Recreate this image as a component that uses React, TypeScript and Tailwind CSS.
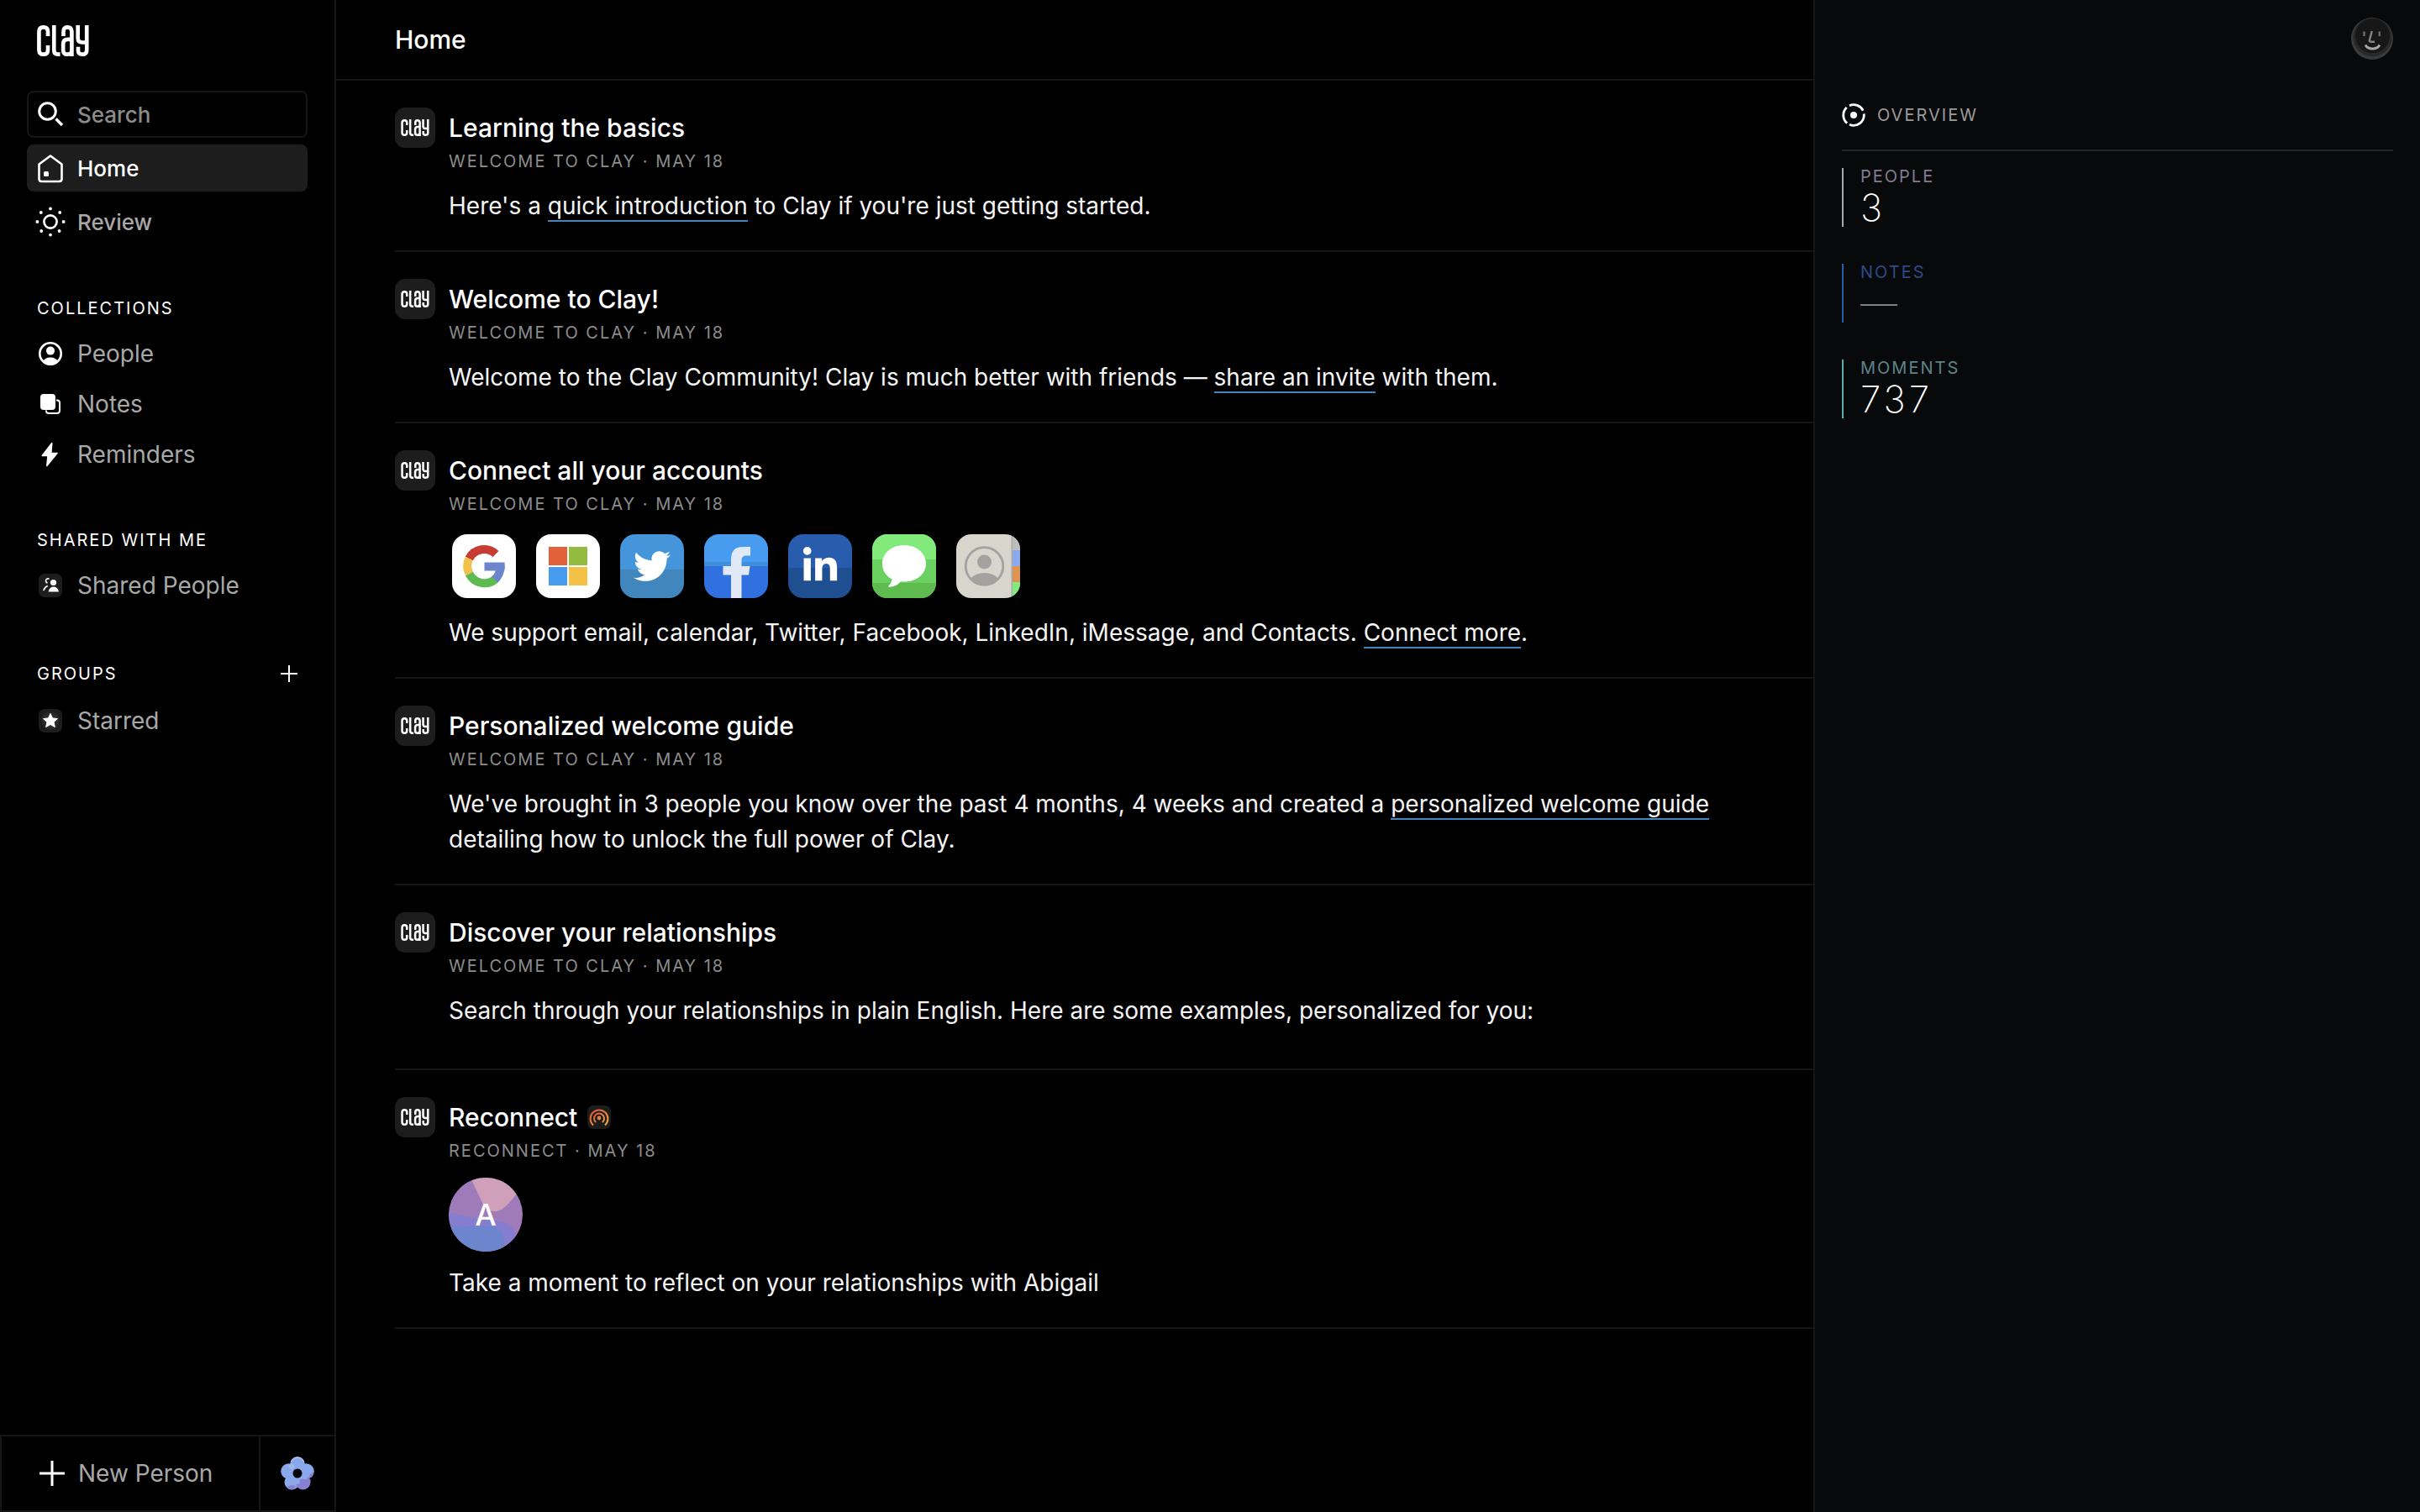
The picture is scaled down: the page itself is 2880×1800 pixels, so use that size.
import React from "react";
import { FaTwitter, FaLinkedinIn } from "react-icons/fa";

function ClayLogo({ className }: { className: string }) {
  return (
    <svg viewBox="132 90 187 112" className={className} role="img" aria-label="Clay" fill="none" stroke="#fff" strokeWidth="14">
      <path d="M171 129V113Q171 97 155 97T139 113V179Q139 195 155 195T171 179V163" />
      <path d="M193 90V181Q193 195 207 195H215" />
      <path d="M227 129V113Q227 97 241.500 97T257 113V202M257 141H243Q226 141 226 158V179Q226 195 241 195Q257 195 257 180" />
      <path d="M279 90V136Q279 152 295 152H311M311 90V179Q311 195 295 195T280 179V168" />
    </svg>
  );
}

function SearchIcon() {
  return (
    <svg viewBox="0 0 32 32" className="size-8" fill="none" stroke="#fff" strokeWidth="3" strokeLinecap="butt">
      <circle cx="12.500" cy="12.500" r="9.800" />
      <path d="M22.500 21.500L30 29" strokeWidth="3.400" />
    </svg>
  );
}

function HomeIcon() {
  return (
    <svg viewBox="0 0 32 36" className="h-9 w-8" fill="none" stroke="#fff" strokeWidth="2.600" strokeLinejoin="round">
      <path d="M2.500 13.500L16 3.500L29.500 13.500V31Q29.500 34 26.500 34H5.500Q2.500 34 2.500 31Z" />
      <rect x="8" y="22" width="6" height="6" rx="1.500" fill="#fff" stroke="none" />
    </svg>
  );
}

function SunIcon() {
  return (
    <svg viewBox="0 0 36 36" className="size-9" fill="#fff">
      <circle cx="18" cy="18" r="7.600" fill="none" stroke="#fff" strokeWidth="2.600" />
      <circle cx="18" cy="2.400" r="1.900" />
      <circle cx="18" cy="33.600" r="1.900" />
      <circle cx="2.400" cy="18" r="1.900" />
      <circle cx="33.600" cy="18" r="1.900" />
      <circle cx="6.800" cy="7" r="1.900" />
      <circle cx="29.200" cy="7" r="1.900" />
      <circle cx="7.200" cy="29" r="1.900" />
      <circle cx="28.600" cy="29" r="1.900" />
    </svg>
  );
}

function PeopleIcon() {
  return (
    <svg viewBox="0 0 28 28" className="size-7" fill="#fff">
      <circle cx="14" cy="14" r="12.700" fill="none" stroke="#fff" strokeWidth="2.600" />
      <circle cx="14" cy="10.600" r="5" />
      <path d="M5 24Q7 18.500 14 18.500T23 24Q19 28 14 28T5 24Z" />
    </svg>
  );
}

function NotesIcon() {
  return (
    <svg viewBox="0 0 28 28" className="size-7" fill="#fff">
      <rect x="2" y="2" width="18" height="19" rx="4" />
      <path d="M21 9.500H22Q25 9.500 25 12.500V21.500Q25 25 21.500 25H12Q9 25 9 22V21.500" fill="none" stroke="#fff" strokeWidth="2" />
      <path d="M21.200 11V19Q21.200 22.200 18 22.200H10" fill="none" stroke="#000" strokeWidth="1.600" />
    </svg>
  );
}

function BoltIcon() {
  return (
    <svg viewBox="0 0 28 30" className="h-8 w-7" fill="#fff" stroke="#fff" strokeWidth="1.500" strokeLinejoin="round">
      <path d="M15.800 1.500L4.200 16.500H11L9.800 28.500L22 13.500H14.800Z" />
    </svg>
  );
}

function SharedIcon() {
  return (
    <svg viewBox="0 0 28 28" className="size-7">
      <rect width="28" height="28" rx="7" fill="#1d1d1d" />
      <circle cx="17.500" cy="10.500" r="3.600" fill="#fff" />
      <path d="M11.500 21.500Q13 15.600 17.800 15.600T24 21.500Z" fill="#fff" />
      <path d="M12.500 6Q8.500 5.500 8.500 8.500Q8.600 10.500 10.500 11M10.800 14.500Q7.500 15.500 5.800 20" fill="none" stroke="#fff" strokeWidth="1.700" />
    </svg>
  );
}

function StarIcon() {
  return (
    <svg viewBox="0 0 28 28" className="size-7">
      <rect width="28" height="28" rx="7" fill="#1d1d1d" />
      <circle cx="14" cy="14" r="10.500" fill="#29292b" />
      <path d="M14 5.500L16.500 10.900L22.500 11.600L18.100 15.600L19.300 21.500L14 18.500L8.700 21.500L9.900 15.600L5.500 11.600L11.500 10.900Z" fill="#fff" stroke="#fff" strokeWidth="1" strokeLinejoin="round" />
    </svg>
  );
}

function PlusIcon({ className }: { className: string }) {
  return (
    <svg viewBox="0 0 30 30" className={className} fill="none" stroke="#fff" strokeWidth="3">
      <path d="M15 0V30M0 15H30" />
    </svg>
  );
}

function FlowerIcon() {
  return (
    <svg viewBox="0 0 40 40" className="size-10">
      <circle cx="20" cy="9.500" r="9" fill="#8aa8ec" />
      <circle cx="9.500" cy="17.500" r="9.300" fill="#8aa8ec" />
      <circle cx="30.500" cy="17.500" r="9.300" fill="#8aa8ec" />
      <circle cx="13.500" cy="30.500" r="9" fill="#8aa8ec" />
      <circle cx="26.500" cy="30.500" r="9" fill="#8880d0" />
      <circle cx="20" cy="20" r="13" fill="#8aa8ec" />
      <path d="M23 27H35.500Q36 36 28 39Q23 39.500 22 36Z" fill="#8880d0" />
      <path d="M7 36.500Q13 32 18 35.500Q16 39.500 12 39.200Q8.500 39 7 36.500Z" fill="#8880d0" />
      <path d="M34 22Q38 19 39.600 17Q39.500 24 34.500 25.500Z" fill="#8880d0" />
      <path d="M9 11L13 8L17 12L13 16Z" fill="#9fbbea" />
      <path d="M12.500 6Q14.500 0.800 20 0.800T27.500 6" fill="none" stroke="#dfe9ff" strokeWidth="1" />
      <circle cx="20" cy="20" r="5.500" fill="#000" />
    </svg>
  );
}

function FaceIcon() {
  return (
    <svg viewBox="0 0 50 50" className="size-[50px]">
      <circle cx="25" cy="25" r="25" fill="#3a3b3d" />
      <circle cx="25.500" cy="23.500" r="23" fill="#29292a" />
      <circle cx="25.500" cy="21.500" r="20.500" fill="#171717" />
      <g fill="none" stroke="#858585" strokeWidth="2.400">
        <path d="M15.500 16.500V22M33.800 16.500V22" stroke="#6e6e6e" />
        <path d="M24.800 16L22 26.500Q21.300 28.600 23.500 28.800H28" />
        <path d="M17 32.500Q19.500 37 25.500 37T34 32.500" stroke="#a8a8a8" strokeWidth="2.800" />
      </g>
    </svg>
  );
}

function OverviewIcon() {
  return (
    <svg viewBox="0 0 28 28" className="size-7" fill="none" stroke="#fff" strokeWidth="2.800">
      <circle cx="14" cy="14" r="4" fill="#fff" stroke="none" />
      <path d="M9 2.700A12.400 12.400 0 0 1 25.200 8.700" />
      <path d="M26.200 12.500A12.400 12.400 0 0 1 9 25.300" />
      <path d="M6.200 23.600A12.400 12.400 0 0 1 5.700 5" />
    </svg>
  );
}

function ReconnectIcon() {
  return (
    <svg viewBox="0 0 28 28" className="size-7">
      <defs>
        <linearGradient id="reconnect" x1="0" y1="0" x2="1" y2="1">
          <stop offset="0" stopColor="#e0552f" />
          <stop offset="1" stopColor="#f0a850" />
        </linearGradient>
      </defs>
      <rect width="28" height="28" rx="7" fill="#1d1d1d" />
      <g fill="none" stroke="url(#reconnect)" strokeWidth="2">
        <path d="M7 23.500A10.400 10.400 0 1 1 21 23.500" />
        <path d="M10 20A6 6 0 1 1 18 20" />
      </g>
      <circle cx="14" cy="15" r="2.400" fill="#ea7a3c" />
    </svg>
  );
}

function Tile({ label, className, children }: { label: string; className: string; children: React.ReactNode }) {
  return (
    <li className={`flex size-[76px] items-center justify-center overflow-hidden rounded-[18px] ${className}`} aria-label={label}>
      {children}
    </li>
  );
}

function AccountTiles() {
  return (
    <ul className="mt-4 flex gap-6 p-1">
      <Tile label="Google" className="bg-white">
        <svg viewBox="0 0 76 76" className="size-full" fill="none" strokeWidth="10">
          <path d="M52 23.500A20 20 0 0 0 20.300 29" stroke="#c63b34" />
          <path d="M20.300 29A20 20 0 0 0 20.500 47" stroke="#f2c14b" />
          <path d="M20.500 47A20 20 0 0 0 52 53" stroke="#5fba4f" />
          <path d="M51 54Q57 48 57.800 38.500" stroke="#6c85cc" />
          <path d="M38.500 33.500H62.500Q63.500 39 62 43.500H38.500Z" fill="#6c85cc" stroke="none" />
        </svg>
      </Tile>
      <Tile label="Microsoft" className="bg-white">
        <svg viewBox="0 0 76 76" className="size-full">
          <rect x="15" y="15" width="22" height="22" fill="#e2613b" />
          <rect x="39" y="15" width="22" height="22" fill="#92bb40" />
          <rect x="15" y="39" width="22" height="22" fill="#489cf0" />
          <rect x="39" y="39" width="22" height="22" fill="#f3c147" />
        </svg>
      </Tile>
      <Tile label="Twitter" className="bg-linear-to-b from-[#4495da] from-55% to-[#4186bd] to-55% text-white">
        <FaTwitter size={44} />
      </Tile>
      <Tile label="Facebook" className="bg-[#3170df]">
        <svg viewBox="0 0 76 76" className="size-full">
          <rect width="76" height="33" fill="#489cf0" />
          <rect y="33" width="76" height="5" fill="#3f90d8" />
          <path d="M32 76V48.500H22.500V38H32V30Q32 15 46 15H55V25.500H50Q44.500 25.500 44.500 31V38H54.500L53 48.500H44.500V76Z" fill="#e2e9f6" />
        </svg>
      </Tile>
      <Tile label="LinkedIn" className="bg-linear-to-b from-[#285dae] from-52% to-[#1f4e91] to-52% text-white">
        <FaLinkedinIn size={46} />
      </Tile>
      <Tile label="iMessage" className="bg-[#6ad05f]">
        <svg viewBox="0 0 76 76" className="size-full">
          <rect width="76" height="30" fill="#82ea7a" />
          <rect y="58" width="76" height="18" fill="#5fba4f" />
          <path d="M38 13C52 13 64 22 64 35S52 56.500 38 56.500Q36 56.500 34 56.300Q29 62.500 20 63Q18.500 62 20 60.500Q23.500 57.500 23.500 53.500C16 49.500 12 43 12 35C12 22 24 13 38 13Z" fill="#fff" />
        </svg>
      </Tile>
      <Tile label="Contacts" className="bg-[#d8d5cd]">
        <svg viewBox="0 0 76 76" className="size-full">
          <rect x="66" width="10" height="19" fill="#bdbdbd" />
          <rect x="66" y="19" width="10" height="19" fill="#8aa8ec" />
          <rect x="66" y="38" width="10" height="19" fill="#de9350" />
          <rect x="66" y="57" width="10" height="19" fill="#82ea7a" />
          <rect x="65.500" width="1.500" height="76" fill="#aaa" />
          <circle cx="33.500" cy="38" r="22.300" fill="none" stroke="#a3a29f" strokeWidth="2.800" />
          <circle cx="33.500" cy="33" r="8.500" fill="#a3a29f" />
          <path d="M17.500 52.500Q23 46 33.500 46T49.500 52.500Q43 61 33.500 61T17.500 52.500Z" fill="#a3a29f" />
        </svg>
      </Tile>
    </ul>
  );
}

function Avatar() {
  return (
    <div className="relative mt-4 flex size-[88px] items-center justify-center overflow-hidden rounded-full">
      <svg viewBox="0 0 88 88" className="absolute inset-0 size-full" aria-hidden="true">
        <rect width="88" height="88" fill="#a07bb9" />
        <path d="M26 0L40 30Q46 41 57 40Q66 39 80 20L88 0Z" fill="#d09fba" />
        <path d="M0 41Q18 45 36 50Q60 50 70 55Q80 60 80 74L88 88H0Z" fill="#857dcd" />
        <path d="M0 57Q28 59 48 58Q62 58 65 68L66 88H0Z" fill="#6c85cc" />
      </svg>
      <span className="relative text-[36px] font-medium leading-none">A</span>
    </div>
  );
}

function Entry({ title, meta, badge, media, extra, children }: {
  title: string;
  meta: string;
  badge?: React.ReactNode;
  media?: React.ReactNode;
  extra?: boolean;
  children: React.ReactNode;
}) {
  return (
    <article className={`flex gap-4 border-b-2 border-[#151515] pt-8 ${extra ? "pb-12" : "pb-8"}`}>
      <div className="flex size-12 shrink-0 items-center justify-center rounded-xl bg-[#1d1d1d]">
        <ClayLogo className="h-5 w-[34px]" />
      </div>
      <div className="min-w-0 flex-1">
        <h2 className="flex h-12 items-center gap-3 text-[30px] font-medium text-white">
          {title}
          {badge}
        </h2>
        <p className="text-[20px] leading-8 tracking-[2px] text-[#8c8c8c] uppercase">{meta}</p>
        {media}
        <p className="mt-4 max-w-[1520px] text-[28px] leading-[42px] text-[#f5f5f5]">{children}</p>
      </div>
    </article>
  );
}

function TextLink({ children }: { children: React.ReactNode }) {
  return (
    <a href="#" className="border-b-2 border-[#4186bd]">
      {children}
    </a>
  );
}

function NavRow({ icon, label }: { icon: React.ReactNode; label: string }) {
  return (
    <a href="#" className="flex h-[60px] items-center gap-3.5 px-2.5 text-[28px] text-[#a8a8a8]">
      <span className="flex w-9 shrink-0 justify-center">{icon}</span>
      {label}
    </a>
  );
}

function SectionTitle({ children }: { children: React.ReactNode }) {
  return <h3 className="text-[20px] leading-8 tracking-[2px] text-white uppercase">{children}</h3>;
}

function Stat({ label, value, bar, text, empty }: { label: string; value: string; bar: string; text: string; empty?: boolean }) {
  return (
    <div className={`flex h-[70px] flex-col border-l-2 pl-5 ${bar}`}>
      <dt className={`text-[20px] leading-5 tracking-[2px] uppercase ${text}`}>{label}</dt>
      <dd className={`text-[44px] leading-[54px] font-extralight tracking-[4px] ${empty ? "text-[#8c8c8c]" : "text-white"}`}>{value}</dd>
    </div>
  );
}

export default function App() {
  return (
    <div className="flex min-h-screen bg-black font-['Inter','Noto_Sans',sans-serif] text-white">
      <aside className="flex w-[400px] shrink-0 flex-col border-r-2 border-[#151515]">
        <div className="px-8">
          <a href="#" className="block px-3 pt-[30px]">
            <ClayLogo className="h-[37px] w-[62px]" />
          </a>
          <nav className="mt-[41px] flex flex-col gap-2">
            <label className="flex h-14 items-center gap-3.5 rounded-lg border-2 border-[#151515] px-2">
              <span className="flex w-9 shrink-0 justify-center">
                <SearchIcon />
              </span>
              <input
                type="text"
                placeholder="Search"
                aria-label="Search"
                className="w-full min-w-0 bg-transparent text-[26px] font-medium outline-none placeholder:text-[#8c8c8c]"
              />
            </label>
            <a href="#" className="flex h-14 items-center gap-3.5 rounded-lg bg-[#1d1d1d] px-2.5 text-[26px] font-medium">
              <span className="flex w-9 shrink-0 justify-center">
                <HomeIcon />
              </span>
              Home
            </a>
            <a href="#" className="flex h-14 items-center gap-3.5 px-2.5 text-[26px] font-medium text-[#a8a8a8]">
              <span className="flex w-9 shrink-0 justify-center">
                <SunIcon />
              </span>
              Review
            </a>
          </nav>
          <section className="mt-[59px]">
            <div className="px-3">
              <SectionTitle>Collections</SectionTitle>
            </div>
            <div className="mt-2">
              <NavRow icon={<PeopleIcon />} label="People" />
              <NavRow icon={<NotesIcon />} label="Notes" />
              <NavRow icon={<BoltIcon />} label="Reminders" />
            </div>
          </section>
          <section className="mt-14">
            <div className="px-3">
              <SectionTitle>Shared with me</SectionTitle>
            </div>
            <div className="mt-2">
              <NavRow icon={<SharedIcon />} label="Shared People" />
            </div>
          </section>
          <section className="mt-[59px]">
            <div className="flex items-center justify-between px-3">
              <SectionTitle>Groups</SectionTitle>
              <button type="button" aria-label="Add group">
                <PlusIcon className="size-5" />
              </button>
            </div>
            <div className="mt-2.5">
              <NavRow icon={<StarIcon />} label="Starred" />
            </div>
          </section>
        </div>
        <div className="mt-auto flex h-[92px] border-y-2 border-l-2 border-[#151515]">
          <button type="button" className="flex flex-1 items-center gap-4 pl-[45px] text-[28px] text-[#a8a8a8]">
            <PlusIcon className="size-[30px]" />
            New Person
          </button>
          <button type="button" aria-label="What's new" className="flex w-[90px] items-center justify-center border-l-2 border-[#151515]">
            <FlowerIcon />
          </button>
        </div>
      </aside>

      <main className="min-w-0 flex-1">
        <header className="flex h-24 items-center border-b-2 border-[#151515] pl-[70px]">
          <h1 className="text-[30px] font-medium">Home</h1>
        </header>
        <div className="pl-[70px]">
          <Entry title="Learning the basics" meta="Welcome to Clay · May 18">
            Here's a <TextLink>quick introduction</TextLink> to Clay if you're just getting started.
          </Entry>
          <Entry title="Welcome to Clay!" meta="Welcome to Clay · May 18">
            Welcome to the Clay Community! Clay is much better with friends — <TextLink>share an invite</TextLink> with them.
          </Entry>
          <Entry title="Connect all your accounts" meta="Welcome to Clay · May 18" media={<AccountTiles />}>
            We support email, calendar, Twitter, Facebook, LinkedIn, iMessage, and Contacts. <TextLink>Connect more</TextLink>.
          </Entry>
          <Entry title="Personalized welcome guide" meta="Welcome to Clay · May 18">
            We've brought in 3 people you know over the past 4 months, 4 weeks and created a{" "}
            <TextLink>personalized welcome guide</TextLink> detailing how to unlock the full power of Clay.
          </Entry>
          <Entry title="Discover your relationships" meta="Welcome to Clay · May 18" extra>
            Search through your relationships in plain English. Here are some examples, personalized for you:
          </Entry>
          <Entry title="Reconnect" meta="Reconnect · May 18" badge={<ReconnectIcon />} media={<Avatar />}>
            Take a moment to reflect on your relationships with Abigail
          </Entry>
        </div>
      </main>

      <aside className="w-[722px] shrink-0 border-l-2 border-[#151515] bg-[#08090b] pt-[21px] pr-8 pl-8">
        <div className="flex justify-end">
          <button type="button" aria-label="Profile">
            <FaceIcon />
          </button>
        </div>
        <div className="mt-11 flex h-[65px] gap-3.5 border-b-2 border-[#252628] pt-2">
          <OverviewIcon />
          <h2 className="text-[20px] leading-7 tracking-[2px] text-[#9b9b9b] uppercase">Overview</h2>
        </div>
        <dl className="mt-5 flex flex-col gap-11">
          <Stat label="People" value="3" bar="border-[#a8a8a8]" text="text-[#857a90]" />
          <Stat label="Notes" value="—" bar="border-[#285dae]" text="text-[#2c4a85]" empty />
          <Stat label="Moments" value="737" bar="border-[#5fa9aa]" text="text-[#5c8487]" />
        </dl>
      </aside>
    </div>
  );
}
